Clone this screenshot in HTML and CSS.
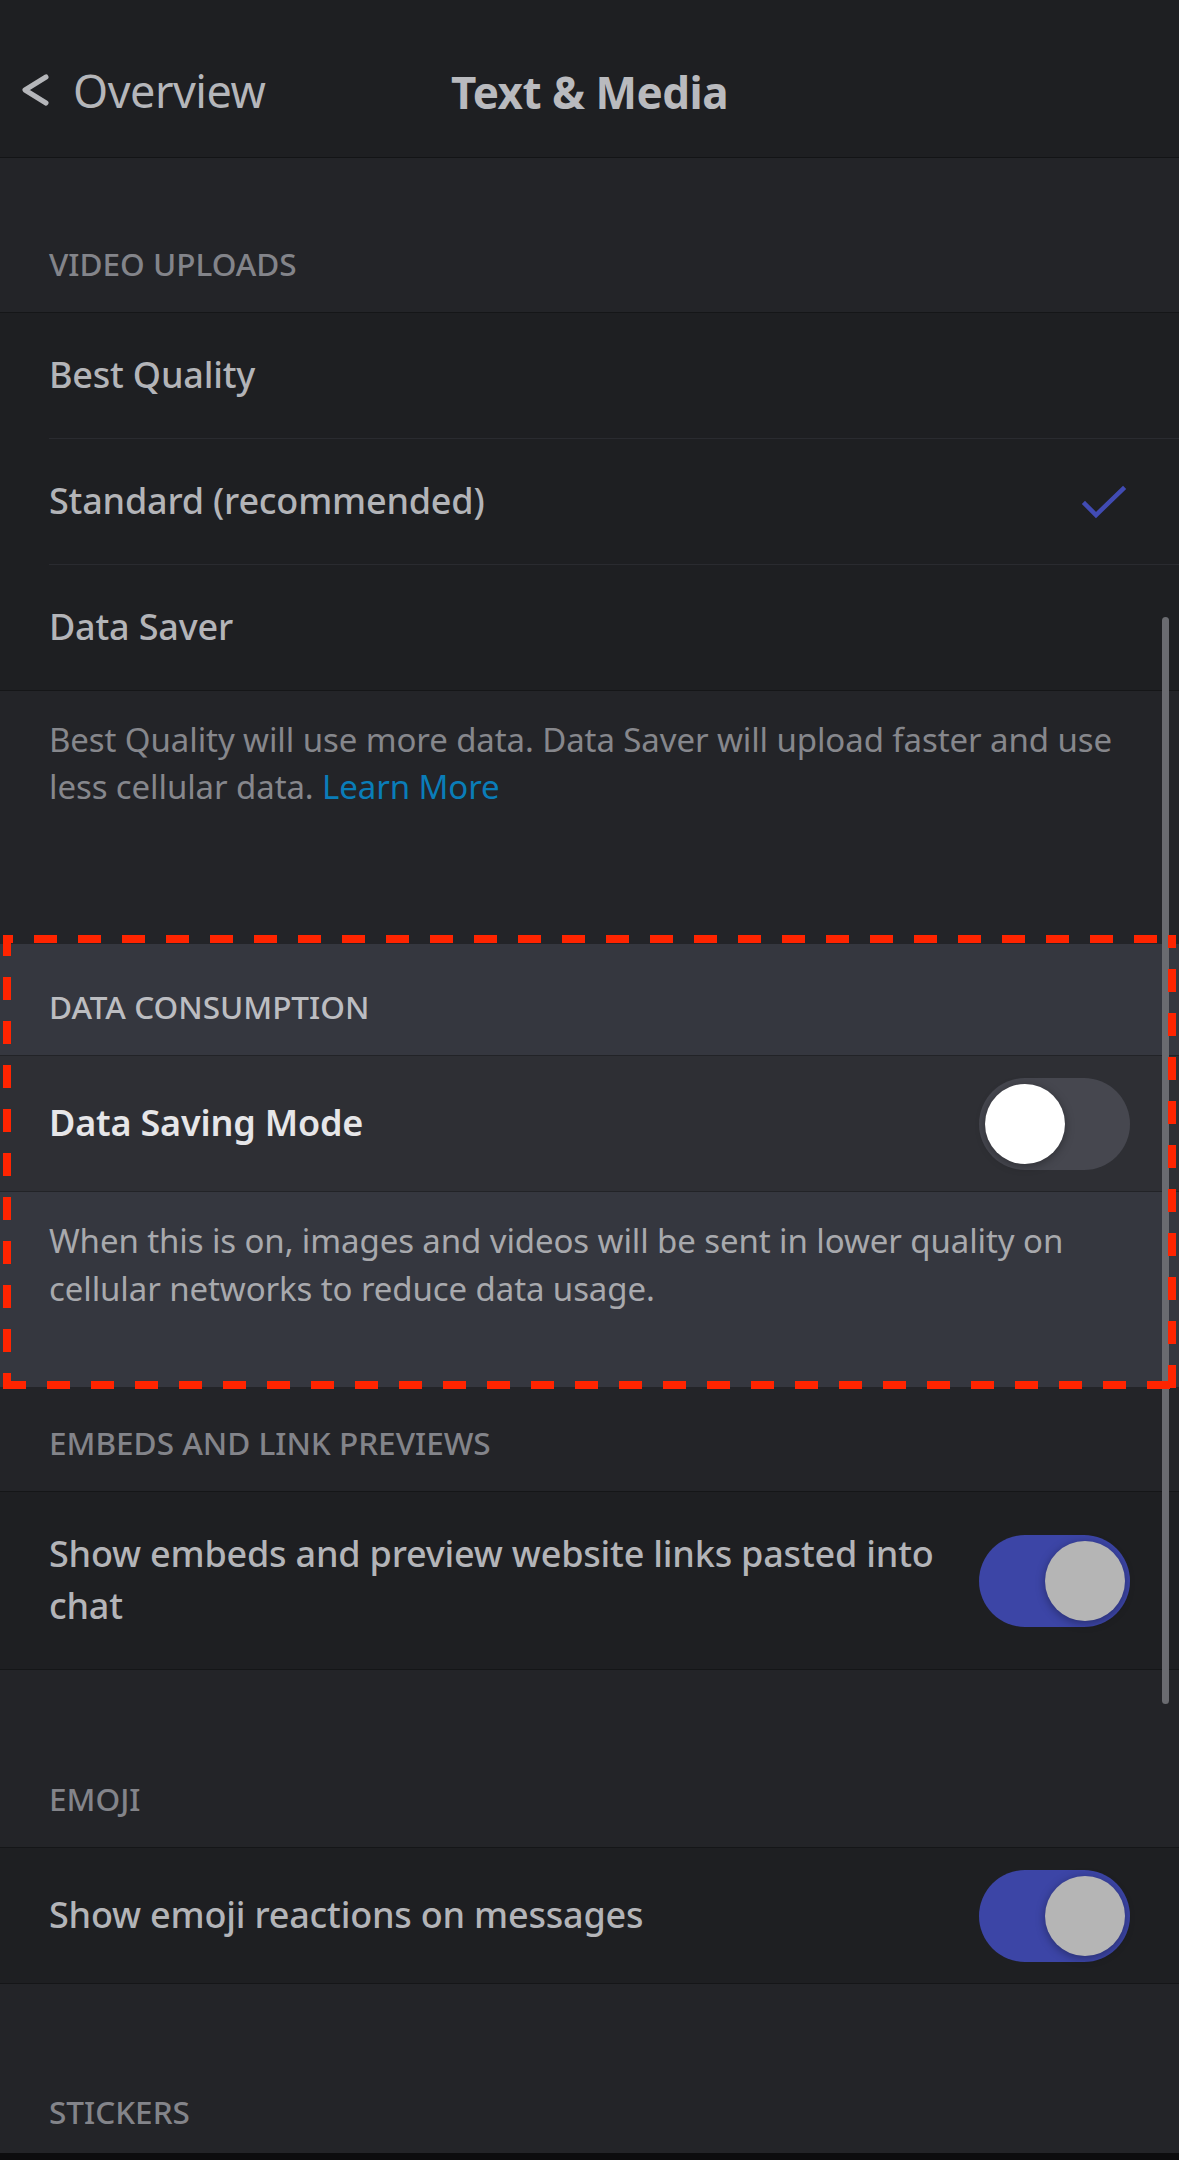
FILE: index.html
```html
<!DOCTYPE html>
<html lang="en">
<head>
<meta charset="utf-8">
<title>Text &amp; Media</title>
<link rel="stylesheet" href="styles.css">
</head>
<body>
<div class="screen">
  <header class="topbar">
    <div class="back">
      <svg class="chev" width="30" height="40" viewBox="0 0 30 40"><polyline points="25,6 4,19 25,32" fill="none" stroke="#b5b6ba" stroke-width="5" stroke-linecap="round" stroke-linejoin="round"/></svg>
      <span class="back-label">Overview</span>
    </div>
    <h1 class="title">Text &amp; Media</h1>
  </header>

  <section class="section">
    <div class="sec-head sec-video">VIDEO UPLOADS</div>
    <div class="group">
      <div class="row option"><span class="row-label">Best Quality</span></div>
      <div class="row option"><span class="row-label">Standard (recommended)</span>
        <svg class="check" width="46" height="34" viewBox="0 0 46 34"><polyline points="4,19 15,30 42,4" fill="none" stroke="#414bb3" stroke-width="4.5" stroke-linecap="square"/></svg>
      </div>
      <div class="row option"><span class="row-label">Data Saver</span></div>
    </div>
    <p class="desc">Best Quality will use more data. Data Saver will upload faster and use less cellular data. <span class="link">Learn More</span></p>
  </section>

  <section class="section hl">
    <div class="sec-head sec-data">DATA CONSUMPTION</div>
    <div class="group">
      <div class="row toggle-row"><span class="row-label strong">Data Saving Mode</span>
        <span class="toggle off"><span class="knob"></span></span>
      </div>
    </div>
    <p class="desc">When this is on, images and videos will be sent in lower quality on cellular networks to reduce data usage.</p>
  </section>

  <section class="section">
    <div class="sec-head sec-embeds">EMBEDS AND LINK PREVIEWS</div>
    <div class="group">
      <div class="row toggle-row"><span class="row-label">Show embeds and preview website links pasted into chat</span>
        <span class="toggle on"><span class="knob"></span></span>
      </div>
    </div>
  </section>

  <section class="section">
    <div class="sec-head sec-emoji">EMOJI</div>
    <div class="group">
      <div class="row toggle-row"><span class="row-label">Show emoji reactions on messages</span>
        <span class="toggle on"><span class="knob"></span></span>
      </div>
    </div>
  </section>

  <section class="section">
    <div class="sec-head sec-stickers">STICKERS</div>
  </section>

  <div class="home-strip"></div>

  <div class="scrollbar"></div>
  <svg class="annot" width="1179" height="466" viewBox="0 0 1179 466">
    <g fill="none" stroke="#ff2400" stroke-width="8">
      <line x1="3" y1="13" x2="1176" y2="13" stroke-dasharray="23 21" stroke-dashoffset="13"/>
      <line x1="7" y1="9" x2="7" y2="463" stroke-dasharray="23 21" stroke-dashoffset="2"/>
      <line x1="1172" y1="9" x2="1172" y2="463" stroke-dasharray="23 21" stroke-dashoffset="10"/>
      <line x1="3" y1="459" x2="1176" y2="459" stroke-dasharray="23 21" stroke-dashoffset="0"/>
    </g>
  </svg>
</div>
</body>
</html>
```

FILE: styles.css
```css
* { box-sizing: border-box; }
html, body { margin: 0; padding: 0; }
body {
  background: #232428;
  font-family: "Noto Sans", "Open Sans", sans-serif;
  width: 1179px;
  height: 2160px;
  overflow: hidden;
}
.screen {
  position: relative;
  width: 1179px;
  height: 2160px;
  overflow: hidden;
  background: #232428;
}
.topbar {
  height: 158px;
  background: #1e1f22;
  border-bottom: 1px solid #131416;
  display: flex;
  align-items: center;
  position: relative;
}
.back {
  display: flex;
  align-items: center;
  padding-left: 21px;
  padding-top: 24px;
  gap: 22px;
  color: #b5b6ba;
}
.chev { display: block; }
.back-label {
  font-size: 45px;
  line-height: 60px;
  font-weight: 400;
  letter-spacing: -0.5px;
}
.title {
  margin: 0;
  position: absolute;
  left: 0;
  right: 0;
  top: 62px;
  text-align: center;
  font-size: 44px;
  line-height: 60px;
  font-weight: 700;
  color: #b9babe;
  letter-spacing: -0.5px;
}
.sec-head {
  font-size: 31.5px;
  line-height: 46px;
  font-weight: 500;
  color: #83848a;
  padding: 0 49px 25px;
}
.sec-video { padding-top: 83px; }
.sec-data { padding-top: 40px; }
.sec-embeds { padding-top: 33px; }
.sec-emoji { padding-top: 106px; }
.sec-stickers { padding-top: 105px; padding-bottom: 20px; }
.group {
  background: #1e1f22;
  border-top: 1px solid #151618;
  border-bottom: 1px solid #151618;
}
.row {
  display: flex;
  align-items: center;
  justify-content: space-between;
  padding: 0 49px;
  position: relative;
}
.row.option {
  min-height: 124px;
  padding-right: 52px;
}
.row.option + .row.option { border-top: 1px solid transparent; }
.row.option + .row.option::before {
  content: "";
  position: absolute;
  left: 49px;
  right: 0;
  top: -1px;
  height: 1px;
  background: #2a2b30;
}
.row.toggle-row { min-height: 135px; }
.row-label {
  font-size: 36px;
  line-height: 52px;
  font-weight: 500;
  color: #b3b4b8;
  max-width: 900px;
  letter-spacing: -0.2px;
  padding: 36px 0 37px;
}
.row-label.strong {
  color: #e6e6e8;
  font-weight: 600;
}
.check { display: block; flex: none; }
.desc {
  margin: 0;
  padding: 25px 49px 74px;
  font-size: 33px;
  line-height: 47px;
  color: #86878c;
  letter-spacing: -0.1px;
}
.link { color: #0a7db8; }
.section:first-of-type .desc { margin-bottom: 60px; }

.hl { background: #35373f; }
.hl .sec-head { color: #bcbdc1; }
.hl .group { background: #2e2f34; border-color: #222327; }
.hl .desc { color: #a8a9ad; line-height: 48px; }

.toggle {
  flex: none;
  width: 151px;
  height: 92px;
  border-radius: 46px;
  position: relative;
  display: block;
}
.toggle.off { background: #46474f; }
.toggle.on { background: #3c45a6; }
.knob {
  position: absolute;
  top: 6px;
  width: 80px;
  height: 80px;
  border-radius: 50%;
  box-shadow: 0 2px 10px rgba(0,0,0,0.35);
}
.toggle.off .knob { left: 6px; background: #ffffff; }
.toggle.on .knob { right: 5px; background: #b5b5b5; }

.home-strip {
  position: absolute;
  left: 0;
  right: 0;
  bottom: 0;
  height: 7px;
  background: #0c0c0e;
}
.scrollbar {
  position: absolute;
  left: 1162px;
  top: 617px;
  width: 7px;
  height: 1087px;
  border-radius: 4px;
  background: #6a6b70;
}
.annot {
  position: absolute;
  left: 0;
  top: 926px;
}
```
